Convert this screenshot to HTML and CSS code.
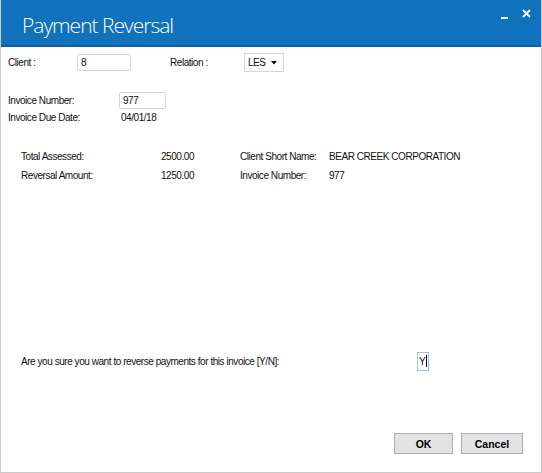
FILE: index.html
```html
<!DOCTYPE html>
<html>
<head>
    <meta charset="UTF-8">
    <title>Payment Reversal</title>
    <link rel="stylesheet" href="styles.css">
</head>
<body>
    <div class="window">
        <div class="titlebar">
            <span class="title">Payment Reversal</span>
            <div class="controls">
                <svg class="ctl-min" width="7" height="8" viewBox="0 0 7 8"><rect x="0" y="6" width="7" height="2" fill="#fff"/></svg>
                <svg class="ctl-close" width="9" height="9" viewBox="0 0 9 9"><path d="M1 1 L8 8 M8 1 L1 8" stroke="#fff" stroke-width="1.8"/></svg>
            </div>
        </div>

        <div class="content">
            <div class="row row-client">
                <span class="lbl lbl-client">Client :</span>
                <div class="field field-client">8</div>
                <span class="lbl lbl-relation">Relation :</span>
                <div class="combo">
                    <span>LES</span>
                    <svg width="6" height="4" viewBox="0 0 6 4"><path d="M0 0 L6 0 L3 3.5 Z" fill="#000"/></svg>
                </div>
            </div>

            <div class="row row-invoice">
                <span class="lbl lbl-invoice">Invoice Number:</span>
                <div class="field field-invoice">977</div>
            </div>
            <div class="row row-due">
                <span class="lbl lbl-due">Invoice Due Date:</span>
                <span>04/01/18</span>
            </div>

            <div class="summary">
                <span>Total Assessed:</span>
                <span>2500.00</span>
                <span>Client Short Name:</span>
                <span>BEAR CREEK CORPORATION</span>
                <span>Reversal Amount:</span>
                <span>1250.00</span>
                <span>Invoice Number:</span>
                <span>977</span>
            </div>

            <div class="row row-confirm">
                <span class="lbl lbl-confirm">Are you sure you want to reverse payments for this invoice [Y/N]:</span>
                <div class="field field-yn">Y<span class="caret"></span></div>
            </div>

            <div class="buttons">
                <button class="btn btn-ok">OK</button>
                <button class="btn btn-cancel">Cancel</button>
            </div>
        </div>
    </div>
</body>
</html>
```

FILE: styles.css
```css
html, body {
    margin: 0;
    padding: 0;
    background: #fff;
}
.window {
    width: 542px;
    height: 473px;
    box-sizing: border-box;
    border: 1px solid #c9c9c9;
    border-top: none;
    display: flex;
    flex-direction: column;
    font-family: 'Liberation Sans', Arial, sans-serif;
    font-size: 10px;
    letter-spacing: -0.45px;
    color: #111;
    white-space: nowrap;
    overflow: hidden;
}
.titlebar {
    height: 45px;
    background: #1072bc;
    border-bottom: 2px solid #0d5fa0;
    margin: 0 -1px;
    display: flex;
    align-items: flex-start;
    justify-content: space-between;
    flex-shrink: 0;
}
.title {
    font-family: 'Open Sans', 'Noto Sans', sans-serif;
    font-weight: 300;
    font-size: 21px;
    letter-spacing: -1px;
    color: #fff;
    margin: 12px 0 0 22px;
    line-height: 26px;
}
.controls {
    display: flex;
    align-items: flex-start;
    margin: 9px 11px 0 0;
}
.ctl-min {
    margin: 2px 14px 0 0;
}
.content {
    flex: 1;
    display: flex;
    flex-direction: column;
    padding: 0 0 0 7px;
}
.row {
    display: flex;
    align-items: center;
}
.row-client {
    margin-top: 6px;
    height: 19px;
}
.lbl-client {
    width: 69px;
}
.field {
    box-sizing: border-box;
    height: 17px;
    border: 1px solid #d4d4d4;
    border-radius: 2px;
    background: #fff;
    padding: 1px 0 0 3px;
    line-height: 14px;
}
.field-client {
    width: 54px;
    margin-right: 39px;
}
.lbl-relation {
    width: 74px;
}
.combo {
    box-sizing: border-box;
    width: 40px;
    height: 19px;
    border: 1px solid #d4d4d4;
    display: flex;
    align-items: center;
    justify-content: space-between;
    padding: 0 6px 0 3px;
}
.row-invoice {
    margin-top: 20px;
    height: 17px;
}
.lbl-invoice {
    width: 111px;
}
.field-invoice {
    width: 47px;
}
.row-due {
    margin-top: 0;
    height: 17px;
}
.lbl-due {
    width: 113px;
}
.summary {
    display: grid;
    grid-template-columns: 140px 79px 89px auto;
    grid-auto-rows: 19px;
    align-items: center;
    margin: 21px 0 0 13px;
}
.row-confirm {
    margin: 167px 0 0 13px;
    height: 19px;
}
.lbl-confirm {
    width: 396px;
}
.field-yn {
    width: 12px;
    height: 19px;
    border-color: #99c3ec;
    border-radius: 0;
    padding: 2px 0 0 1px;
    display: flex;
    align-items: flex-start;
}
.caret {
    width: 1px;
    height: 12px;
    background: #000;
    margin-left: 1px;
}
.buttons {
    display: flex;
    justify-content: flex-end;
    gap: 8px;
    margin: 62px 18px 0 0;
}
.btn {
    height: 21px;
    box-sizing: border-box;
    background: #e3e3e3;
    border: 1px solid #adadad;
    font-family: 'Liberation Sans', Arial, sans-serif;
    font-size: 10.5px;
    font-weight: bold;
    color: #000;
    padding: 0;
}
.btn-ok {
    width: 59px;
}
.btn-cancel {
    width: 62px;
}
```
